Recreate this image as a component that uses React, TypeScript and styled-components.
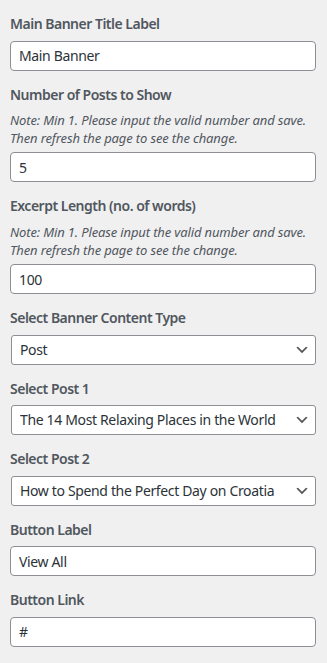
import React from "react";
import styled, { createGlobalStyle } from "styled-components";

const FONT = `"Segoe UI", "Noto Sans", "Open Sans", sans-serif`;

const Global = createGlobalStyle`
  html, body { margin: 0; padding: 0; background: #f0f0f1; }
  * { box-sizing: border-box; }
  body { font-family: ${FONT}; -webkit-font-smoothing: antialiased; }
`;

const Panel = styled.div`
  padding: 12px 11px 12px 10px;
  background: #f0f0f1;
  min-height: 663px;
  display: flex;
  flex-direction: column;
  gap: 12px;
`;

const Control = styled.div`
  display: flex;
  flex-direction: column;
`;

const Title = styled.span`
  display: block;
  font-size: 14px;
  line-height: 1.75;
  font-weight: 600;
  letter-spacing: -0.5px;
  color: #50575e;
  margin-bottom: 4px;
`;

const Description = styled.span`
  display: block;
  font-size: 13px;
  font-style: italic;
  line-height: 1.4;
  letter-spacing: -0.14px;
  color: #50575e;
  margin-bottom: 5px;
`;

const TextInput = styled.input`
  width: 100%;
  height: 30px;
  margin: 0;
  padding: 0 8px;
  font-family: ${FONT};
  font-size: 14px;
  line-height: 2;
  letter-spacing: -0.35px;
  color: #2c3338;
  background: #fff;
  border: 1px solid #8c8f94;
  border-radius: 4px;
  outline: none;
`;

const SelectWrap = styled.div`
  position: relative;
  margin-left: 1px;
`;

const Select = styled.select`
  width: 100%;
  height: 30px;
  margin: 0;
  padding: 0 24px 0 8px;
  font-family: ${FONT};
  font-size: 14px;
  line-height: 2;
  letter-spacing: -0.35px;
  color: #2c3338;
  background: #fff;
  border: 1px solid #8c8f94;
  border-radius: 3px;
  appearance: none;
  -webkit-appearance: none;
  outline: none;
`;

const Arrow = styled.svg`
  position: absolute;
  right: 6px;
  top: 7px;
  width: 16px;
  height: 16px;
  pointer-events: none;
`;

const Chevron = () => (
  <Arrow viewBox="0 0 20 20">
    <path d="M5 6l5 5 5-5 2 1-7 7-7-7 2-1z" fill="#555" />
  </Arrow>
);

type Field =
  | { kind: "text"; title: string; value: string; note?: boolean }
  | { kind: "select"; title: string; value: string };

const fields: Field[] = [
  { kind: "text", title: "Main Banner Title Label", value: "Main Banner" },
  { kind: "text", title: "Number of Posts to Show", value: "5", note: true },
  { kind: "text", title: "Excerpt Length (no. of words)", value: "100", note: true },
  { kind: "select", title: "Select Banner Content Type", value: "Post" },
  { kind: "select", title: "Select Post 1", value: "The 14 Most Relaxing Places in the World" },
  { kind: "select", title: "Select Post 2", value: "How to Spend the Perfect Day on Croatia" },
  { kind: "text", title: "Button Label", value: "View All" },
  { kind: "text", title: "Button Link", value: "#" },
];

export default function App() {
  return (
    <>
      <Global />
      <Panel>
        {fields.map((f) => (
          <Control key={f.title}>
            <Title>{f.title}</Title>
            {f.kind === "text" && f.note && (
              <Description>
                Note: Min 1. Please input the valid number and save. Then refresh the page to see the change.
              </Description>
            )}
            {f.kind === "text" ? (
              <TextInput type="text" defaultValue={f.value} />
            ) : (
              <SelectWrap>
                <Select defaultValue={f.value}>
                  <option value={f.value}>{f.value}</option>
                </Select>
                <Chevron />
              </SelectWrap>
            )}
          </Control>
        ))}
      </Panel>
    </>
  );
}
